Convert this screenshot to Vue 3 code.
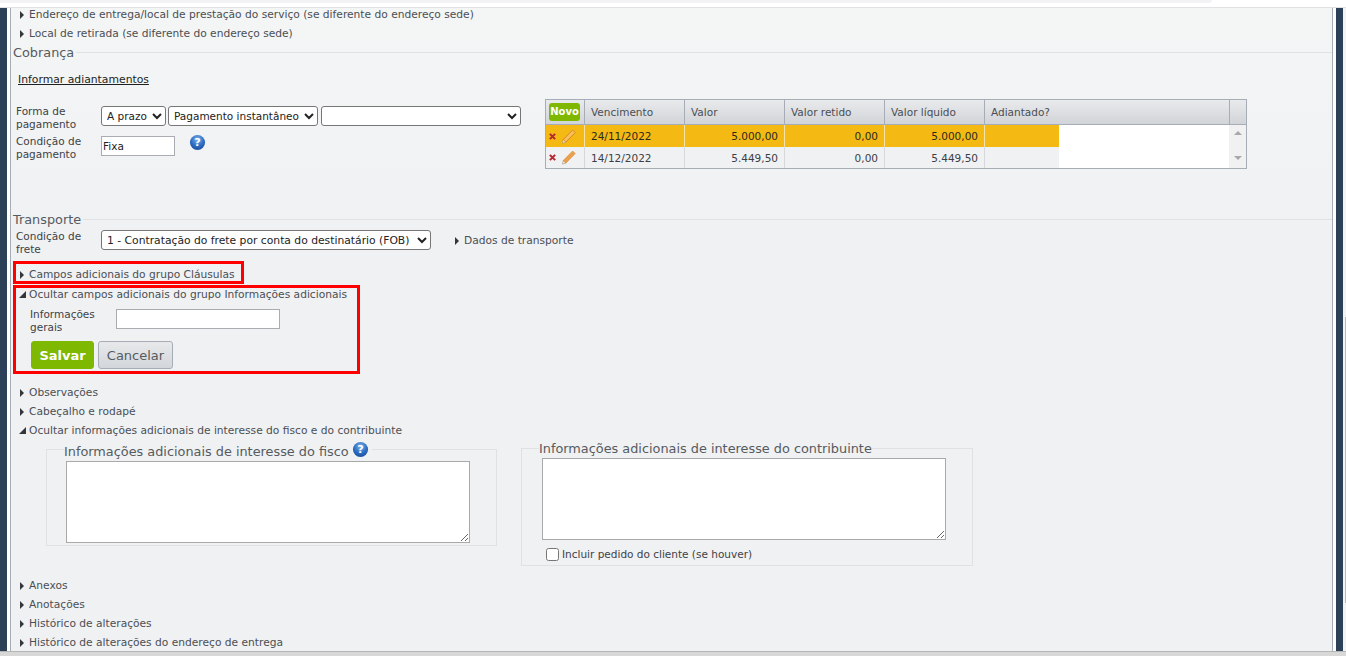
<script setup>
const parcelas = [
  { venc: '24/11/2022', valor: '5.000,00', retido: '0,00', liquido: '5.000,00', on: true },
  { venc: '14/12/2022', valor: '5.449,50', retido: '0,00', liquido: '5.449,50', on: false },
]
</script>

<template>
  <div class="page">
    <div class="topstrip"><div class="toptab"></div></div>
    <div class="frame">
      <div class="navy"></div>
      <main class="content">
        <div class="row first"><i class="tri"></i>Endereço de entrega/local de prestação do serviço (se diferente do endereço sede)</div>
        <div class="row"><i class="tri"></i>Local de retirada (se diferente do endereço sede)</div>

        <div class="section cob"><span>Cobrança</span></div>
        <a class="adiant">Informar adiantamentos</a>

        <div class="cobranca">
          <div class="form">
            <div class="formrow">
              <label class="lbl">Forma de pagamento</label>
              <select class="sel s1"><option>A prazo</option></select>
              <select class="sel s2"><option>Pagamento instantâneo</option></select>
              <select class="sel s3"><option></option></select>
            </div>
            <div class="formrow r2">
              <label class="lbl">Condição de pagamento</label>
              <input class="fixa" value="Fixa" />
              <svg class="help h1" viewBox="0 0 18 18"><use href="#help" /></svg>
            </div>
          </div>

          <div class="grid">
            <div class="ghead">
              <div class="c0"><span class="novo">Novo</span></div>
              <div class="c1">Vencimento</div>
              <div class="c2">Valor</div>
              <div class="c3">Valor retido</div>
              <div class="c4">Valor líquido</div>
              <div class="c5">Adiantado?</div>
              <div class="c6"></div>
            </div>
            <div class="gbody">
              <div class="rows">
                <div v-for="p in parcelas" :key="p.venc" class="grow" :class="{ on: p.on }">
                  <div class="c0 acts">
                    <svg class="x" viewBox="0 0 8 8"><path d="M1 1l6 6M7 1l-6 6" /></svg>
                    <svg class="pen" viewBox="0 0 14 15">
                      <path class="body" d="M1.2 10.6L10.6 1l2.6 2.6-9.4 9.6z" />
                      <path d="M1.2 10.6l2.6 2.6-3.4 1z" fill="#f7e6cc" stroke="#8a7355" stroke-width=".4" />
                    </svg>
                  </div>
                  <div class="c1">{{ p.venc }}</div>
                  <div class="c2 num">{{ p.valor }}</div>
                  <div class="c3 num">{{ p.retido }}</div>
                  <div class="c4 num">{{ p.liquido }}</div>
                  <div class="c5"></div>
                </div>
              </div>
              <div class="gfill"></div>
              <div class="gscroll"><i class="up"></i><i class="down"></i></div>
            </div>
          </div>
        </div>

        <div class="section tra"><span>Transporte</span></div>
        <div class="frete">
          <label class="lbl">Condição de frete</label>
          <select class="sel s4"><option>1 - Contratação do frete por conta do destinatário (FOB)</option></select>
          <span class="dados"><i class="tri"></i>Dados de transporte</span>
        </div>

        <div class="redbox rb1"><i class="tri"></i>Campos adicionais do grupo Cláusulas</div>
        <div class="redbox rb2">
          <div class="boxhead"><i class="tri open"></i>Ocultar campos adicionais do grupo Informações adicionais</div>
          <div class="gerais">
            <label class="lbl">Informações gerais</label>
            <input class="inf" />
          </div>
          <div class="btns">
            <button class="salvar">Salvar</button>
            <button class="cancelar">Cancelar</button>
          </div>
        </div>

        <div class="row obs"><i class="tri"></i>Observações</div>
        <div class="row"><i class="tri"></i>Cabeçalho e rodapé</div>
        <div class="row"><i class="tri open"></i>Ocultar informações adicionais de interesse do fisco e do contribuinte</div>

        <div class="fieldsets">
          <fieldset class="fs f1">
            <legend>Informações adicionais de interesse do fisco <svg class="help h2" viewBox="0 0 18 18"><use href="#help" /></svg></legend>
            <textarea class="ta"></textarea>
          </fieldset>
          <fieldset class="fs f2">
            <legend>Informações adicionais de interesse do contribuinte</legend>
            <textarea class="ta"></textarea>
            <label class="chk"><input type="checkbox" />Incluir pedido do cliente (se houver)</label>
          </fieldset>
        </div>

        <div class="row anx"><i class="tri"></i>Anexos</div>
        <div class="row"><i class="tri"></i>Anotações</div>
        <div class="row"><i class="tri"></i>Histórico de alterações</div>
        <div class="row"><i class="tri"></i>Histórico de alterações do endereço de entrega</div>
      </main>
      <div class="navy right"></div>
      <div class="edge"><div class="thumb"></div></div>
    </div>
    <div class="bottom"></div>

    <svg width="0" height="0" class="defs">
      <defs>
        <radialGradient id="hg" cx="50%" cy="30%" r="75%">
          <stop offset="0" stop-color="#7fb2ea" />
          <stop offset=".55" stop-color="#2f6fc4" />
          <stop offset="1" stop-color="#174a98" />
        </radialGradient>
        <symbol id="help" viewBox="0 0 18 18">
          <circle cx="9" cy="9" r="8" fill="url(#hg)" />
          <text x="9" y="13.2" text-anchor="middle" font-family="DejaVu Sans" font-weight="700" font-size="12" fill="#fff">?</text>
        </symbol>
      </defs>
    </svg>
  </div>
</template>

<style>
html, body { margin: 0; height: 100%; overflow: hidden; background: #fff; }
</style>

<style scoped>
.page {
  width: 1346px; height: 656px; overflow: hidden; display: flex; flex-direction: column;
  font-family: "DejaVu Sans", Verdana, sans-serif; font-size: 10.67px; color: #4a4f54; background: #fff;
}
.defs { position: absolute; }
.topstrip { height: 8px; background: #fff; border-bottom: 1px solid #dfe1e3; flex: none; box-sizing: border-box; }
.toptab { width: 1212px; height: 3px; background: #f2f3f4; border-bottom-right-radius: 12px; }
.frame { flex: 1; min-height: 0; display: flex; }
.navy { width: 7px; background: #2c4058; flex: none; }
.navy.right { margin-left: 3px; }
.edge { width: 3px; background: #f3f3f3; display: flex; justify-content: flex-end; }
.thumb { width: 1px; height: 286px; margin-top: 309px; background: #b9b9b9; }
.content {
  flex: none; width: 1323px; margin-left: 3px; overflow: hidden;
  border-left: 1px solid #a6adb6; border-right: 1px solid #a6adb6; box-sizing: border-box; height: 643px;
  background: linear-gradient(#f4f5f5, #f0f1f3 230px);
}
.row { height: 19px; line-height: 19px; padding-left: 8px; white-space: nowrap; display: flex; align-items: center; }
.row.first { margin-top: -3px; }
.tri {
  display: inline-block; width: 0; height: 0; margin: 0 5px 0 1px; flex: none;
  border-left: 4px solid #33373b; border-top: 4.5px solid transparent; border-bottom: 4.5px solid transparent;
}
.tri.open {
  border: 0; width: 7px; height: 7px; margin: 0 3px 0 0; background: #33373b;
  clip-path: polygon(100% 0, 100% 100%, 0 100%);
}
.section { height: 19px; display: flex; align-items: center; font-size: 12.85px; color: #565b60; padding-left: 2px; }
.section span { padding-right: 2px; white-space: nowrap; }
.section::after { content: ""; flex: 1; height: 1px; background: #dfe1e3; }
.adiant { display: block; margin: 11px 0 0 7px; height: 14px; line-height: 14px; color: #1d1f21; text-decoration: underline; font-size: 10.8px; }
.cobranca { display: flex; margin-top: 13px; height: 120px; }
.form { width: 534px; flex: none; padding: 5px 0 0 5px; box-sizing: border-box; }
.lbl { width: 85px; line-height: 13px; display: block; flex: none; color: #3e4246; font-size: 10.5px; }
.formrow { display: flex; align-items: flex-start; }
.formrow.r2 { margin-top: 4px; }
.sel {
  height: 20px; font: inherit; font-size: 10.5px; color: #222; background: #fff; border: 1px solid #767676; border-radius: 3px;
  padding: 0 0 0 1px; margin: 1px 2px 0 0; box-sizing: border-box;
}
.s1 { width: 65px; } .s2 { width: 150px; } .s3 { width: 200px; margin-left: 1px; }
.fixa { width: 74px; height: 20px; box-sizing: border-box; border: 1px solid #a9adb1; font: inherit; font-size: 10.5px; padding: 0 1px; color: #222; margin-top: 1px; background: #fff; }
.help { width: 17px; height: 17px; display: inline-block; }
.h1 { margin: -1px 0 0 14px; }
.grid { width: 702px; height: 70px; border: 1px solid #a6adb6; box-sizing: border-box; background: #fff; margin-top: -1px; font-size: 10.5px; }
.ghead { display: flex; height: 25px; border-bottom: 1px solid #a6adb6; box-sizing: border-box; background: linear-gradient(#e9eaec, #d1d4d8); line-height: 24px; }
.ghead > div { border-right: 1px solid #a6adb6; box-sizing: border-box; padding-left: 6px; flex: none; }
.c0 { width: 39px; } .c1 { width: 100px; } .c2 { width: 100px; } .c3 { width: 100px; } .c4 { width: 100px; } .c5 { width: 74px; }
.ghead .c5 { width: 245px; } .ghead .c6 { flex: 1; border-right: 0; padding: 0; }
.ghead .c0 { padding: 3px 0 0 3px; line-height: 16px; }
.novo { display: block; width: 31px; height: 18px; line-height: 18px; background: #7fb800; border-radius: 3px; color: #fff; font-weight: 700; font-size: 10px; text-align: center; }
.gbody { display: flex; height: 43px; }
.rows { width: 513px; flex: none; }
.grow { display: flex; height: 22px; line-height: 22px; background: #f0f1f3; color: #3c4044; box-sizing: border-box; }
.grow + .grow { height: 21px; }
.grow.on { background: #f5b914; color: #2c2a20; }
.grow > div { box-sizing: border-box; border-right: 1px solid #d5d8db; padding: 0 6px; flex: none; }
.grow.on > div { border-right-color: #f7e3a8; }
.grow .c5 { border-right: 0; width: 74px; }
.num { text-align: right; }
.acts { display: flex; align-items: center; padding: 0 0 0 3px !important; gap: 6px; }
.x { width: 7px; height: 7px; fill: none; stroke: #b32a30; stroke-width: 2.4; flex: none; }
.pen { width: 14px; height: 15px; flex: none; }
.body { fill: #ec9f4c; stroke: #d98a30; stroke-width: .6; }
.grow.on .body { fill: #f6c05a; stroke: #dc8626; stroke-width: 1; }
.gfill { flex: 1; background: #fff; }
.gscroll { width: 17px; flex: none; background: #f1f1f1; display: flex; flex-direction: column; justify-content: space-between; align-items: center; padding: 6px 0 8px; box-sizing: border-box; }
.up { border: 4px solid transparent; border-top: 0; border-bottom: 4px solid #a8a8a8; }
.down { border: 4px solid transparent; border-bottom: 0; border-top: 4px solid #a8a8a8; }
.section.tra { margin-top: -10px; }
.frete { display: flex; align-items: flex-start; padding-left: 5px; height: 28px; }
.frete .lbl { width: 85px; margin-top: 1px; }
.s4 { width: 330px; margin: 1px 0 0 0; font-size: 10.75px; }
.dados { display: flex; align-items: center; margin: 2px 0 0 23px; height: 19px; }
.redbox { border: 3px solid #ff0000; box-sizing: border-box; }
.rb1 { margin: 4px 0 0 2px; width: 231px; height: 23px; display: flex; align-items: center; padding: 4px 0 0 3px; white-space: nowrap; }
.rb2 { margin: 1px 0 0 2px; width: 347px; height: 89px; padding-left: 3px; }
.boxhead { display: flex; align-items: center; height: 13px; white-space: nowrap; }
.gerais { display: flex; padding-left: 11px; margin-top: 8px; height: 28px; }
.gerais .lbl { width: 86px; margin-top: -1px; }
.inf { width: 164px; height: 20px; box-sizing: border-box; border: 1px solid #a9adb1; background: #fff; margin: 0; }
.btns { display: flex; gap: 4px; padding-left: 12px; margin-top: 4px; }
button { font-family: inherit; border-radius: 3px; box-sizing: border-box; height: 28px; padding: 0; }
.salvar { width: 63px; background: #7fb800; border: 1px solid #7fb800; color: #fff; font-weight: 700; font-size: 13px; }
.cancelar { width: 75px; background: linear-gradient(#e8e9eb, #d3d6da); border: 1px solid #a6adb6; color: #565b60; font-size: 13px; }
.row.obs { margin-top: 9px; }
.fieldsets { display: flex; height: 136px; align-items: flex-start; }
.fs { margin: 0; padding: 0; border: 1px solid #dfe1e3; box-sizing: border-box; }
.fs legend { font-size: 12.85px; color: #565b60; padding: 0; line-height: 17px; height: 17px; white-space: nowrap; }
.f1 { width: 451px; margin: 1px 0 0 35px; height: 105px; }
.f1 legend { margin-left: 17px; padding-right: 3px; line-height: 21px; }
.f2 { width: 452px; margin: 0 0 0 24px; height: 126px; }
.f2 legend { margin-left: 17px; }
.h2 { vertical-align: 6px; margin: -13px 0 -8px -1px; }
.ta { display: block; width: 404px; height: 82px; box-sizing: border-box; border: 1px solid #a9a9a9; background: #fff; margin: 0; padding: 0; }
.f1 .ta { margin-left: 19px; margin-top: 3px; }
.f2 .ta { margin-left: 20px; margin-top: 1px; }
.chk { display: flex; align-items: center; height: 16px; margin: 6px 0 0 24px; color: #3e4246; font-size: 10.5px; }
.chk input { margin: 0 3px 0 0; width: 13px; height: 13px; }
.bottom { height: 5px; flex: none; background: #d8d8d8; border-top: 1px solid #b5b5b5; box-sizing: border-box; }
</style>
